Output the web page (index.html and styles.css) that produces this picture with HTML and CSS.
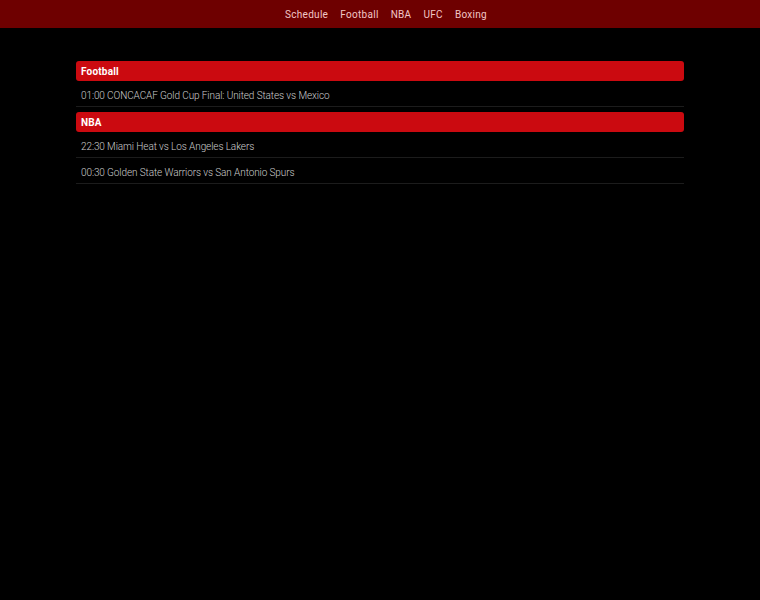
FILE: index.html
```html
<!DOCTYPE html>
<html lang="en">
<head>
<meta charset="utf-8">
<title>Schedule</title>
<link rel="stylesheet" href="styles.css">
</head>
<body>
<header class="topbar">
  <nav class="nav">
    <a href="#">Schedule</a>
    <a href="#">Football</a>
    <a href="#">NBA</a>
    <a href="#">UFC</a>
    <a href="#">Boxing</a>
  </nav>
</header>
<main class="content">
  <section class="group">
    <h2 class="group-title">Football</h2>
    <div class="event">01:00 CONCACAF Gold Cup Final: United States vs Mexico</div>
  </section>
  <section class="group">
    <h2 class="group-title">NBA</h2>
    <div class="event">22:30 Miami Heat vs Los Angeles Lakers</div>
    <div class="event">00:30 Golden State Warriors vs San Antonio Spurs</div>
  </section>
</main>
</body>
</html>
```

FILE: styles.css
```css
* { box-sizing: border-box; }
html, body {
  margin: 0;
  padding: 0;
  background: #000;
  font-family: Roboto, "Liberation Sans", Arial, sans-serif;
}
.topbar {
  height: 28px;
  background: #6e0000;
  display: flex;
  align-items: center;
  justify-content: center;
}
.nav {
  display: flex;
  gap: 12px;
  padding-left: 12px;
}
.nav a {
  color: #f2c6c6;
  text-decoration: none;
  font-size: 10px;
  letter-spacing: 0.3px;
}
.content {
  width: 608px;
  margin: 33px auto 0;
  display: flex;
  flex-direction: column;
  gap: 5px;
}
.group {
  display: flex;
  flex-direction: column;
}
.group-title {
  margin: 0;
  height: 20px;
  line-height: 19px;
  padding: 1px 5px 0;
  background: #cb0a10;
  border-radius: 3px;
  color: #fff;
  font-size: 10px;
  font-weight: bold;
  letter-spacing: 0.2px;
}
.event {
  height: 26px;
  line-height: 21px;
  padding: 4px 5px 0;
  border-bottom: 1px solid #1c1c1c;
  color: #cdcdcd;
  font-size: 10px;
  font-weight: 300;
  letter-spacing: -0.1px;
}
```
